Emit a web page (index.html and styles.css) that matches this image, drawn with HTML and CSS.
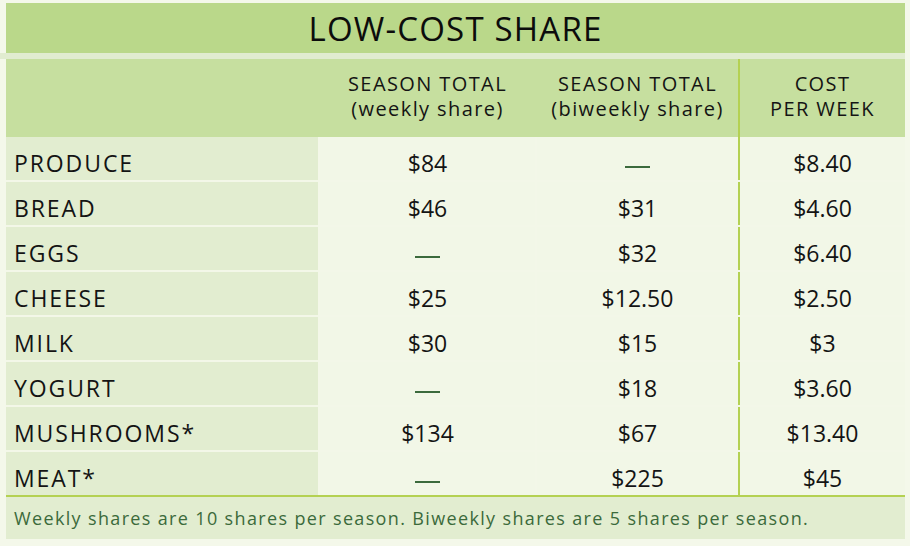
FILE: index.html
```html
<!DOCTYPE html>
<html>
<head>
<meta charset="utf-8">
<link rel="stylesheet" href="styles.css">
</head>
<body>
<div class="sheet">
  <div class="title">LOW-COST SHARE</div>
  <div class="stripe"></div>
  <div class="row head">
    <div class="cell c1"></div>
    <div class="cell c2"><span class="hl">SEASON TOTAL</span><span class="hl">(weekly share)</span></div>
    <div class="cell c3"><span class="hl">SEASON TOTAL</span><span class="hl">(biweekly share)</span></div>
    <div class="cell c4"><span class="hl">COST</span><span class="hl">PER WEEK</span></div>
  </div>
  <div class="row"><div class="cell c1">PRODUCE</div><div class="cell c2">$84</div><div class="cell c3"><span class="dash"></span></div><div class="cell c4">$8.40</div></div>
  <div class="row"><div class="cell c1">BREAD</div><div class="cell c2">$46</div><div class="cell c3">$31</div><div class="cell c4">$4.60</div></div>
  <div class="row"><div class="cell c1">EGGS</div><div class="cell c2"><span class="dash"></span></div><div class="cell c3">$32</div><div class="cell c4">$6.40</div></div>
  <div class="row"><div class="cell c1">CHEESE</div><div class="cell c2">$25</div><div class="cell c3">$12.50</div><div class="cell c4">$2.50</div></div>
  <div class="row"><div class="cell c1">MILK</div><div class="cell c2">$30</div><div class="cell c3">$15</div><div class="cell c4">$3</div></div>
  <div class="row"><div class="cell c1">YOGURT</div><div class="cell c2"><span class="dash"></span></div><div class="cell c3">$18</div><div class="cell c4">$3.60</div></div>
  <div class="row"><div class="cell c1">MUSHROOMS*</div><div class="cell c2">$134</div><div class="cell c3">$67</div><div class="cell c4">$13.40</div></div>
  <div class="row last"><div class="cell c1">MEAT*</div><div class="cell c2"><span class="dash"></span></div><div class="cell c3">$225</div><div class="cell c4">$45</div></div>
  <div class="foot">Weekly shares are 10 shares per season. Biweekly shares are 5 shares per season.</div>
</div>
</body>
</html>
```
FILE: styles.css
```css
html, body {
  margin: 0;
  padding: 0;
  background: #f4f8ea;
}
body {
  font-family: "Open Sans", "DejaVu Sans", sans-serif;
  color: #141414;
}
.sheet {
  width: 899px;
  padding: 3px 0 0 6px;
}
.title {
  height: 50px;
  background: #bad88a;
  display: flex;
  align-items: center;
  justify-content: center;
  font-size: 33px;
  letter-spacing: 1.2px;
  color: #0c0c0c;
}
.stripe {
  height: 6px;
  margin-left: -6px;
  background: #e1ecd0;
}
.row {
  display: flex;
  height: 43px;
  border-bottom: 2px solid #f3f7e8;
}
.row.last {
  border-bottom: none;
}
.cell {
  display: flex;
  align-items: center;
  justify-content: center;
  font-size: 23px;
  background: #f2f7e7;
  padding-top: 9px;
  box-sizing: border-box;
}
.c1 {
  width: 314px;
  justify-content: flex-start;
  padding-left: 8px;
  background: #e2edd0;
  border-right: 2px solid #f3f7e8;
  letter-spacing: 1.9px;
}
.c2 {
  width: 217px;
  border-right: 2px solid #f3f7e8;
}
.c3 {
  width: 203px;
  border-right: 2px solid #b4d152;
}
.c4 {
  width: 165px;
}
.row.head {
  height: 78px;
  border-bottom: none;
}
.head .cell {
  flex-direction: column;
  background: #c6df9f;
  border-right-color: #c6df9f;
  font-size: 20px;
  line-height: 25px;
  letter-spacing: 1.4px;
  text-align: center;
  padding-top: 0;
  padding-bottom: 4px;
}
.hl {
  display: block;
  height: 25px;
}
.head .c3 {
  border-right-color: #b4d152;
}
.dash {
  display: block;
  width: 25px;
  height: 2px;
  margin-top: 7px;
  background: #3c6a3c;
}
.foot {
  height: 42px;
  border-top: 2px solid #b4d152;
  background: #e2edd0;
  color: #3b6a3b;
  font-size: 18px;
  letter-spacing: 1.35px;
  display: flex;
  align-items: center;
  padding-left: 8px;
}
```
